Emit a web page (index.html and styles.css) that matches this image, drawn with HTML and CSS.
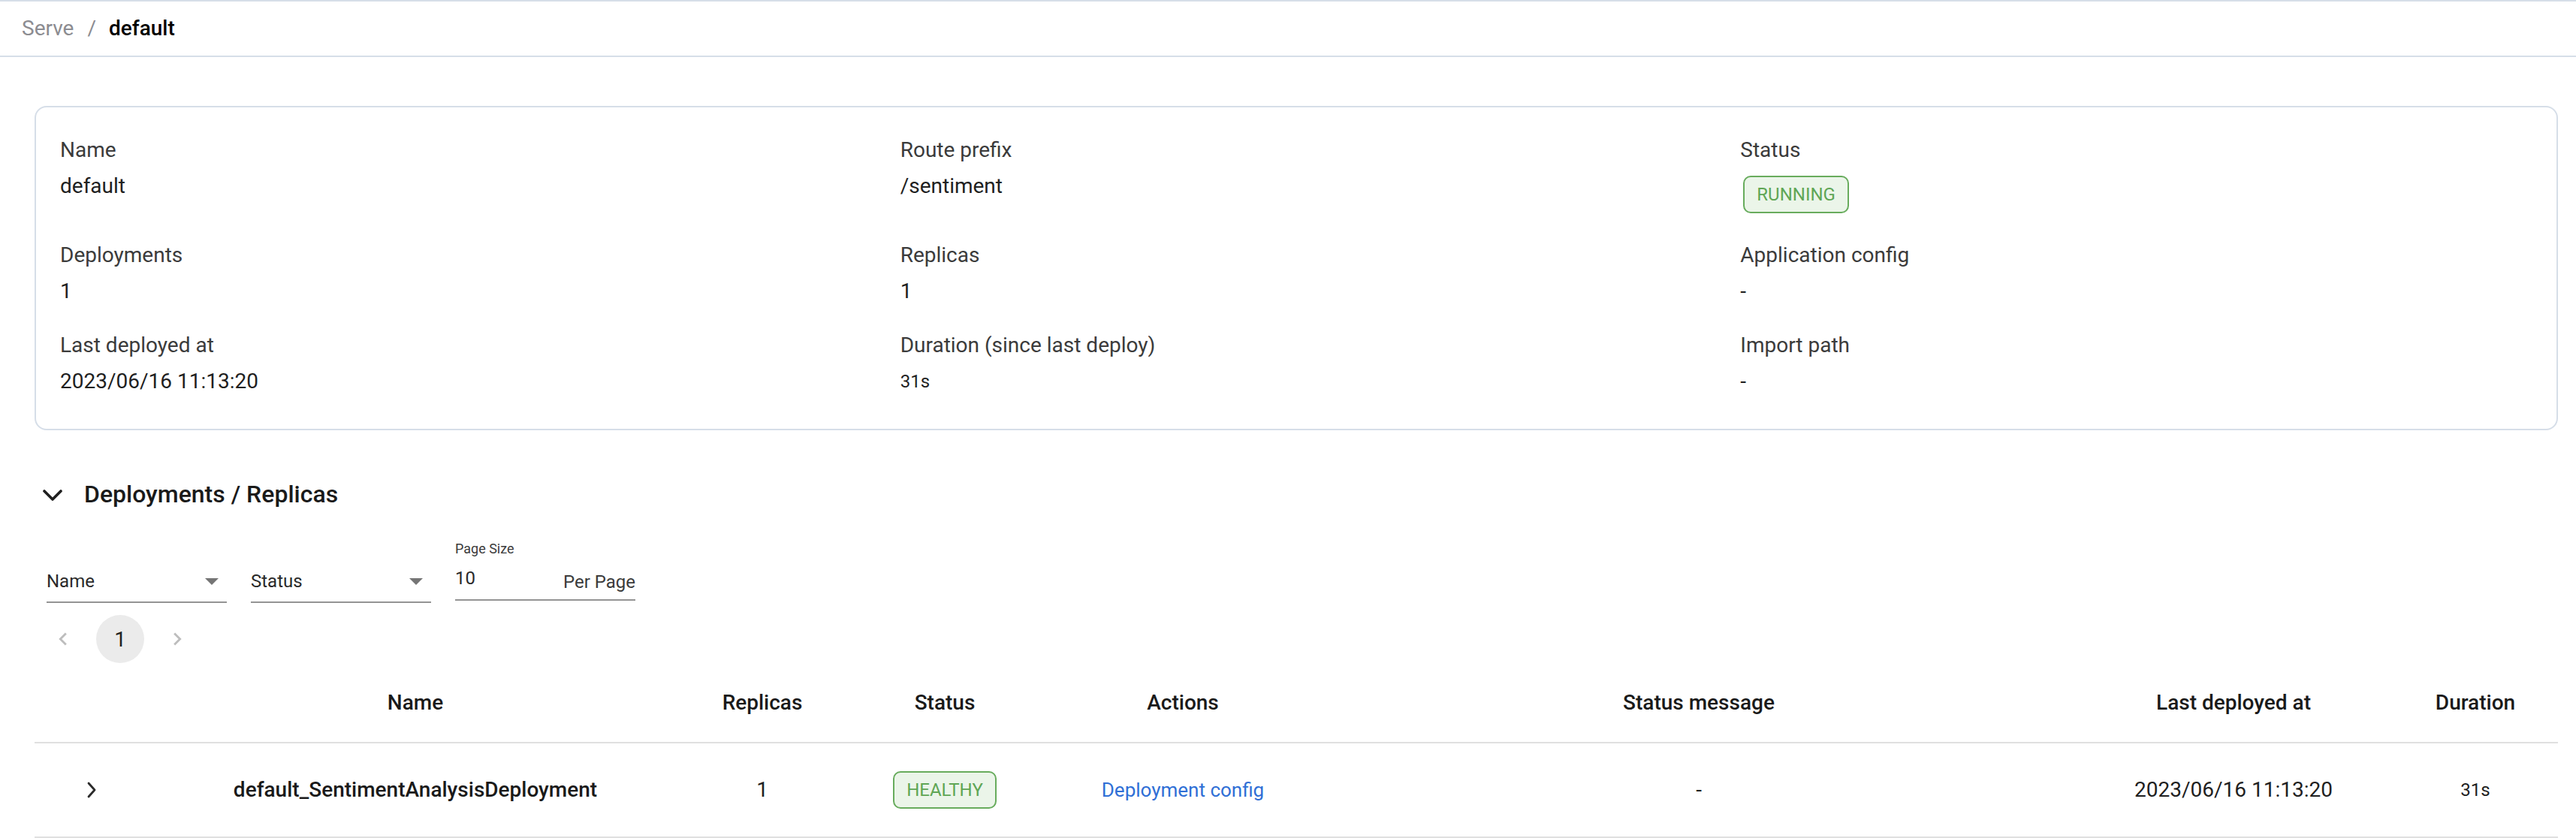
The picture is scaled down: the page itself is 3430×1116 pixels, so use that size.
FILE: index.html
```html
<!DOCTYPE html>
<html lang="en">
<head>
<meta charset="utf-8">
<title>Serve / default</title>
<link rel="stylesheet" href="styles.css">
</head>
<body>
<header class="topbar">
  <nav class="crumbs">
    <span class="crumb-link">Serve</span>
    <span class="crumb-sep">/</span>
    <span class="crumb-current">default</span>
  </nav>
</header>
<main class="content">
  <section class="card">
    <div class="meta-grid">
      <div class="meta-item"><div class="meta-label">Name</div><div class="meta-value">default</div></div>
      <div class="meta-item"><div class="meta-label">Route prefix</div><div class="meta-value">/sentiment</div></div>
      <div class="meta-item"><div class="meta-label">Status</div><div class="chip-wrap"><span class="chip">RUNNING</span></div></div>
      <div class="meta-item"><div class="meta-label">Deployments</div><div class="meta-value">1</div></div>
      <div class="meta-item"><div class="meta-label">Replicas</div><div class="meta-value">1</div></div>
      <div class="meta-item"><div class="meta-label">Application config</div><div class="meta-value">-</div></div>
      <div class="meta-item"><div class="meta-label">Last deployed at</div><div class="meta-value">2023/06/16 11:13:20</div></div>
      <div class="meta-item"><div class="meta-label">Duration (since last deploy)</div><div class="meta-value meta-small">31s</div></div>
      <div class="meta-item"><div class="meta-label">Import path</div><div class="meta-value">-</div></div>
    </div>
  </section>

  <section class="deployments">
    <div class="section-head">
      <svg class="section-toggle" width="26" height="16" viewBox="0 0 26 16"><polyline points="2,2 13,13 24,2" fill="none" stroke="#1f1f1f" stroke-width="3.6" stroke-linecap="round" stroke-linejoin="round"/></svg>
      <h2 class="section-title">Deployments / Replicas</h2>
    </div>

    <div class="filters">
      <div class="select">
        <span class="select-text">Name</span>
        <span class="select-arrow"></span>
      </div>
      <div class="select">
        <span class="select-text">Status</span>
        <span class="select-arrow"></span>
      </div>
      <div class="pagesize">
        <div class="pagesize-label">Page Size</div>
        <div class="pagesize-input">
          <span class="pagesize-value">10</span>
          <span class="pagesize-unit">Per Page</span>
        </div>
      </div>
    </div>

    <div class="pagination">
      <span class="page-btn page-nav"><svg width="34" height="34" viewBox="0 0 24 24"><path d="M15.41 7.41 14 6l-6 6 6 6 1.41-1.41L10.83 12z" fill="#bdbdbd"/></svg></span>
      <span class="page-btn page-current">1</span>
      <span class="page-btn page-nav"><svg width="34" height="34" viewBox="0 0 24 24"><path d="M10 6 8.59 7.41 13.17 12l-4.58 4.59L10 18l6-6z" fill="#bdbdbd"/></svg></span>
    </div>

    <div class="dep-table">
      <div class="dep-row dep-head">
        <div class="cell"></div>
        <div class="cell">Name</div>
        <div class="cell">Replicas</div>
        <div class="cell">Status</div>
        <div class="cell">Actions</div>
        <div class="cell">Status message</div>
        <div class="cell">Last deployed at</div>
        <div class="cell">Duration</div>
      </div>
      <div class="dep-row dep-body">
        <div class="cell"><svg class="row-expand" width="14" height="24" viewBox="0 0 14 24"><polyline points="3,3 11,12 3,21" fill="none" stroke="#2b2b2b" stroke-width="2.8" stroke-linecap="round" stroke-linejoin="round"/></svg></div>
        <div class="cell cell-name">default_SentimentAnalysisDeployment</div>
        <div class="cell">1</div>
        <div class="cell"><span class="chip">HEALTHY</span></div>
        <div class="cell"><a class="link" href="#">Deployment config</a></div>
        <div class="cell">-</div>
        <div class="cell">2023/06/16 11:13:20</div>
        <div class="cell cell-small">31s</div>
      </div>
    </div>
  </section>
</main>
</body>
</html>
```

FILE: styles.css
```css
* { box-sizing: border-box; }

html, body {
  margin: 0;
  padding: 0;
  background: #ffffff;
}

body {
  font-family: Roboto, "Liberation Sans", Arial, sans-serif;
  color: #212121;
  width: 3430px;
  height: 1116px;
  overflow: hidden;
}

/* Top breadcrumb bar */
.topbar {
  height: 76px;
  border-top: 2px solid #d6dee8;
  border-bottom: 2px solid #d6dee8;
  display: flex;
  align-items: center;
  padding: 0 29px;
}

.crumbs {
  display: flex;
  align-items: center;
  font-size: 28px;
  line-height: 40px;
}

.crumb-link { color: #8c8c91; }
.crumb-sep { color: #8c8c91; margin: 0 17px 0 18px; }
.crumb-current { color: #000000; font-weight: 500; }

/* Main content */
.content {
  margin-left: 46px;
  width: 3360px;
  padding-top: 65px;
}

.card {
  border: 2px solid #d6dee8;
  border-radius: 16px;
  padding: 37px 32px 43px;
}

.meta-grid {
  display: grid;
  grid-template-columns: repeat(3, 1fr);
  column-gap: 64px;
  row-gap: 32px;
}

.meta-label {
  font-size: 28px;
  line-height: 40px;
  color: #3b3b3b;
}

.meta-value {
  margin-top: 8px;
  font-size: 28px;
  line-height: 40px;
  color: #1f1f1f;
}

.meta-small { font-size: 24px; }

.chip-wrap {
  margin: 14px 0 4px 4px;
  display: flex;
}

.chip {
  display: inline-flex;
  align-items: center;
  height: 50px;
  padding: 0 16px;
  border: 2px solid #68ac5d;
  border-radius: 10px;
  background: #ebf5e9;
  color: #5fa655;
  font-size: 24px;
  line-height: 34px;
}

/* Deployments section */
.deployments { margin-top: 61px; }

.section-head {
  display: flex;
  align-items: center;
  height: 48px;
}

.section-toggle {
  margin-left: 11px;
  margin-right: 29px;
  margin-top: 4px;
}

.section-title {
  margin: 0;
  font-size: 32px;
  line-height: 48px;
  font-weight: 500;
  color: #1a1a1a;
}

.filters {
  margin-top: 38px;
  margin-left: 16px;
  display: flex;
  align-items: flex-end;
  gap: 32px;
}

.select {
  width: 240px;
  height: 54px;
  padding: 8px 0 10px;
  border-bottom: 2px solid #949494;
  display: flex;
  align-items: center;
  font-size: 24px;
  line-height: 34px;
  color: #2a2a2a;
}

.select-text { flex: 1; }

.select-arrow {
  width: 0;
  height: 0;
  margin-right: 11px;
  border-left: 9px solid transparent;
  border-right: 9px solid transparent;
  border-top: 9px solid #757575;
}

.pagesize {
  width: 240px;
  margin-bottom: 3px;
}

.pagesize-label {
  font-size: 18px;
  line-height: 22px;
  color: #3b3b3b;
  margin-bottom: 4px;
}

.pagesize-input {
  height: 54px;
  border-bottom: 2px solid #949494;
  display: flex;
  align-items: flex-start;
  font-size: 24px;
  line-height: 34px;
  color: #2a2a2a;
}

.pagesize-value { flex: 1; margin-top: 7px; }
.pagesize-unit { margin-top: 12px; color: #3b3b3b; }

.pagination {
  margin-top: 16px;
  display: flex;
  align-items: center;
}

.page-btn {
  width: 64px;
  height: 64px;
  margin: 0 6px;
  border-radius: 50%;
  display: flex;
  align-items: center;
  justify-content: center;
  font-size: 28px;
  color: #222222;
}

.page-current { background: #ebebeb; }

/* Table */
.dep-row {
  display: grid;
  grid-template-columns: 158px 698px 226px 260px 374px 1000px 424px 220px;
  border-bottom: 2px solid #e0e0e0;
}

.dep-head {
  height: 107px;
  font-weight: 500;
  color: #1a1a1a;
}

.dep-body {
  height: 126px;
  color: #1f1f1f;
}

.cell {
  display: flex;
  align-items: center;
  justify-content: center;
  text-align: center;
  font-size: 28px;
  line-height: 40px;
}

.cell-name { font-weight: 500; color: #1a1a1a; }
.cell-small { font-size: 24px; }

.row-expand { margin-left: -6px; }

.link {
  color: #2f6fd6;
  font-size: 26px;
  text-decoration: none;
}
```
